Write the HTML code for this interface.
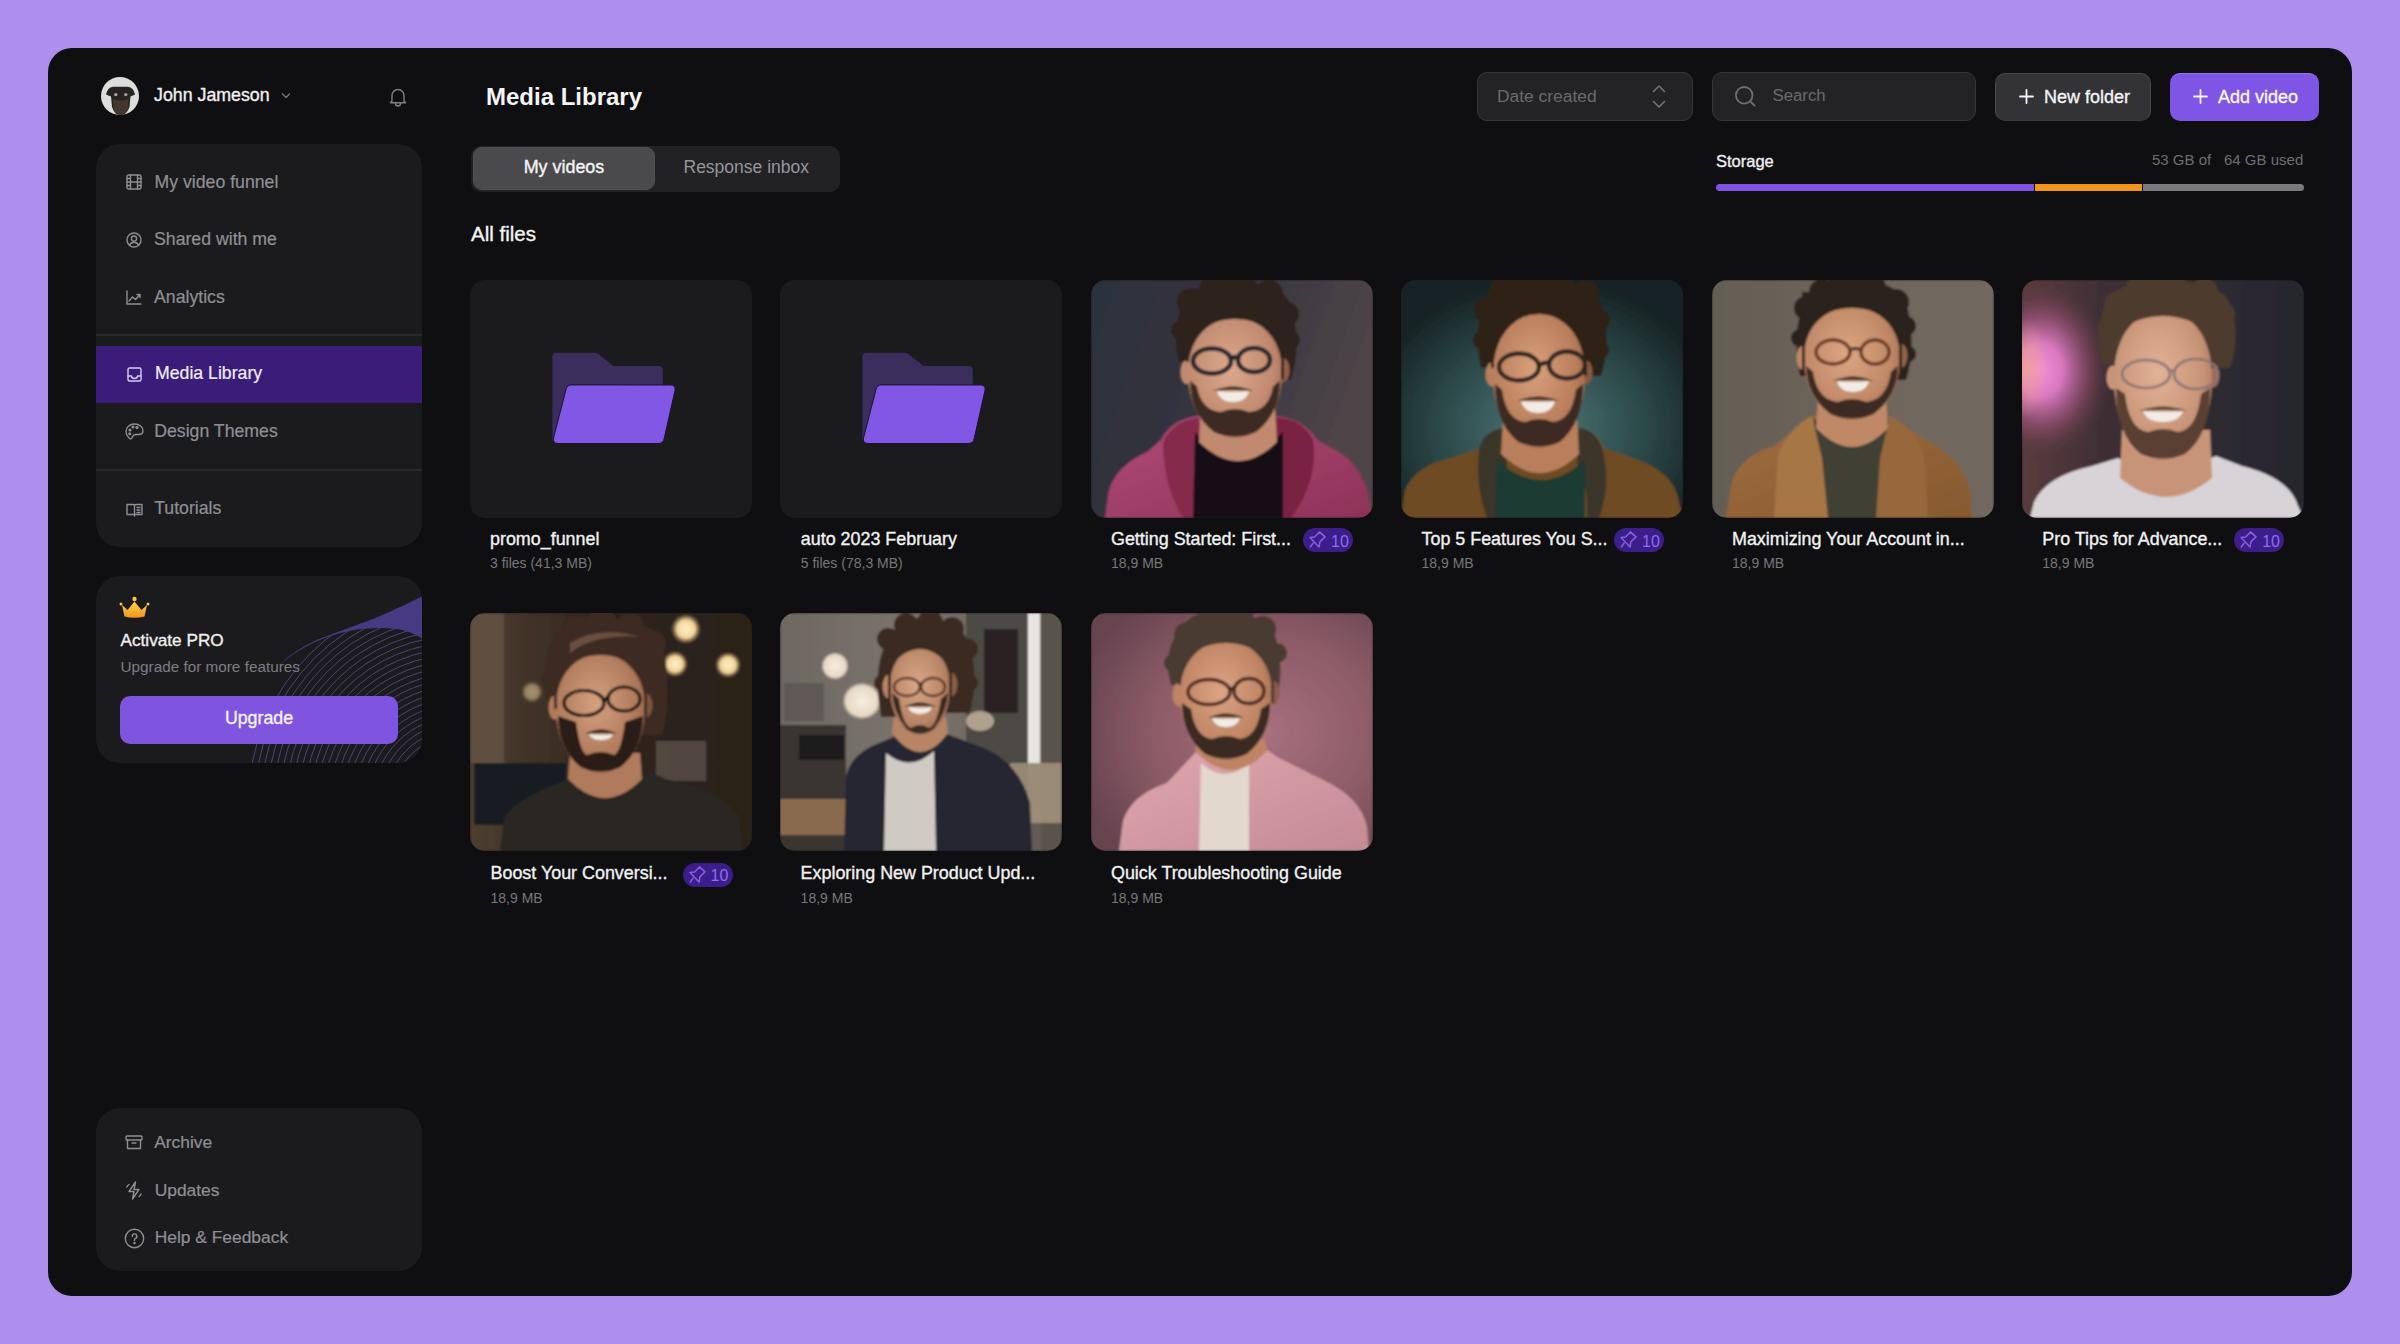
<!DOCTYPE html>
<html><head><meta charset="utf-8">
<style>
*{box-sizing:border-box;margin:0;padding:0}
html,body{width:2400px;height:1344px;overflow:hidden}
body{background:#AD8FEE;font-family:"Liberation Sans",sans-serif;position:relative;color:#fff}
.abs{position:absolute}
.panel{left:48px;top:48px;width:2304px;height:1248px;border-radius:24px;background:#0F0F11}
.card{background:#1B1B1E;border-radius:24px}
.t{position:absolute;white-space:nowrap;line-height:1}
.nav{color:#8F8F93;font-size:17.7px;-webkit-text-stroke:0.2px currentColor}
.ico{position:absolute;fill:none;stroke:#8F8F93;stroke-width:1.4;stroke-linecap:round;stroke-linejoin:round;overflow:visible}
.btn{position:absolute;border-radius:10px}
.thumb{position:absolute;width:282px;height:238px;border-radius:15px;overflow:hidden;background:#1B1B1E}
.title{position:absolute;font-size:17.9px;color:#F2F2F2;white-space:nowrap;line-height:1;-webkit-text-stroke:0.35px #F2F2F2}
.med{-webkit-text-stroke:0.35px currentColor}
.sub{position:absolute;font-size:14px;color:#77777B;white-space:nowrap;line-height:1}
.badge{position:absolute;width:50px;height:24px;border-radius:12px;background:#3C1E8A}
.badge svg{position:absolute;left:6px;top:5px}
.badge span{position:absolute;left:28px;top:5.5px;font-size:16px;line-height:1;color:#8F6CF2}
</style></head>
<body>
<div class="abs panel"></div>

<!-- header user -->
<svg class="abs" style="left:101px;top:77px" width="38" height="38" viewBox="0 0 38 38">
  <defs><clipPath id="av"><circle cx="19" cy="19" r="19"/></clipPath></defs>
  <g clip-path="url(#av)">
    <rect width="38" height="38" fill="#DCDDDD"/>
    <path d="M5,17.5 Q6.5,10.5 12,9.8 L27,9.8 Q32.5,10.5 34,17.5 L29.5,19.5 L28.5,30 Q25,38.5 19.5,38.5 Q14,38.5 11,30 L10,19.5 Z" fill="#272321"/>
    <path d="M12,22 Q19.5,25 27.5,22 L27,32 Q24,38 19.5,38 Q15,38 12.5,32Z" fill="#45372F"/>
    <circle cx="14.8" cy="17.6" r="1.7" fill="#A8A8A8"/><circle cx="24.8" cy="17.6" r="1.7" fill="#A0A0A0"/>
  </g>
</svg>
<div class="t med" style="left:154px;top:86.9px;font-size:17.8px;color:#F0F0F0">John Jameson</div>
<svg class="ico" style="left:281px;top:93px" width="10" height="6" viewBox="0 0 10 6"><path d="M1.5 1l3.5 3.5L8.5 1" stroke="#7A7A7E" stroke-width="1.3"/></svg>
<svg class="ico" style="left:388px;top:86px" width="20" height="22" viewBox="0 0 20 22"><path d="M4 15V9.5a6 6 0 0 1 12 0V15l1.6 1.8H2.4L4 15z M7.5 17.5a2.5 2.5 0 0 0 5 0" stroke="#7E7E82" stroke-width="1.4"/></svg>

<!-- title -->
<div class="t" style="left:486px;top:85.3px;font-size:24px;font-weight:bold;color:#F4F4F4">Media Library</div>

<!-- sidebar card 1 -->
<div class="abs card" style="left:96px;top:144px;width:326px;height:403px"></div>
<div class="abs" style="left:96px;top:334px;width:326px;height:1.5px;background:#29292C"></div>
<div class="abs" style="left:96px;top:469px;width:326px;height:1.5px;background:#29292C"></div>
<div class="abs" style="left:96px;top:346px;width:326px;height:57px;background:#3A1D78"></div>

<svg class="ico" style="left:126px;top:174px" width="16" height="16" viewBox="0 0 16 16"><rect x="1" y="1" width="14" height="14" rx="1.5"/><path d="M4.5 1v14M11.5 1v14M1 8h14M1 4.5h3.5M1 11.5h3.5M11.5 4.5H15M11.5 11.5H15"/></svg>
<div class="t nav" style="left:154.5px;top:174px">My video funnel</div>
<svg class="ico" style="left:126px;top:232px" width="16" height="16" viewBox="0 0 16 16"><circle cx="8" cy="8" r="7"/><circle cx="8" cy="6.6" r="2.6"/><path d="M3.4 13.2Q5 10.2 8 10.2T12.6 13.2"/></svg>
<div class="t nav" style="left:154px;top:231px">Shared with me</div>
<svg class="ico" style="left:126px;top:290px" width="16" height="15" viewBox="0 0 16 15"><path d="M1 1v13h14M3 11l3.5-4 3 2.5L14 4.5M11 4.5h3v3"/></svg>
<div class="t nav" style="left:154px;top:289px">Analytics</div>
<svg class="ico" style="left:127px;top:367px;stroke:#D8CCF8" width="15" height="15" viewBox="0 0 15 15"><rect x="1" y="1" width="13" height="13" rx="1.5"/><path d="M1 9h3.5q0 2.5 3 2.5t3-2.5H14"/></svg>
<div class="t nav" style="left:155px;top:365.3px;color:#F2ECFF">Media Library</div>
<svg class="ico" style="left:125px;top:423px" width="19" height="17" viewBox="0 0 19 17"><path d="M9.5 1C4.5 1 1 4.5 1 8.5c0 3 1.5 5 3 6.5s3 .5 3.5-1 1.5-2.5 3.5-2.5h2.5c3 0 4.5-1.5 4.5-3.5C18 4 14.5 1 9.5 1z"/><circle cx="5" cy="7" r=".9" fill="#8F8F93"/><circle cx="8" cy="4" r=".9" fill="#8F8F93"/><circle cx="12" cy="4.5" r=".9" fill="#8F8F93"/><circle cx="4.8" cy="10.8" r=".9" fill="#8F8F93"/></svg>
<div class="t nav" style="left:154.2px;top:423px">Design Themes</div>
<svg class="ico" style="left:126px;top:503px" width="17" height="14" viewBox="0 0 17 14"><path d="M1 1.5h6a1.5 1.5 0 0 1 1.5 1.5v10M16 1.5h-6A1.5 1.5 0 0 0 8.5 3v10M1 1.5v10h7.5M16 1.5v10H8.5M11 4.5h3M11 7h3M11 9.5h3"/></svg>
<div class="t nav" style="left:154.2px;top:499.5px">Tutorials</div>

<!-- activate pro -->
<div class="abs card" style="left:96px;top:576px;width:326px;height:187px;overflow:hidden">
  <svg class="abs" style="left:0;top:0" width="326" height="187" viewBox="0 0 326 187"><!--wave--><defs><clipPath id="wc"><path d="M327,19.6 C315,26 300,33 285.4,39.4 C265,48 243,55 221.8,63.4 C205,71 190,82 179.4,94.5 C170,106 164,120 160,140 L152,187 L327,187Z"/></clipPath></defs><g clip-path="url(#wc)" fill="none" stroke="#5A4E92" stroke-width="1" opacity="0.8"><circle cx="362" cy="226" r="42"/><circle cx="362" cy="226" r="48.2"/><circle cx="362" cy="226" r="54.400000000000006"/><circle cx="362" cy="226" r="60.60000000000001"/><circle cx="362" cy="226" r="66.80000000000001"/><circle cx="362" cy="226" r="73.00000000000001"/><circle cx="362" cy="226" r="79.20000000000002"/><circle cx="362" cy="226" r="85.40000000000002"/><circle cx="362" cy="226" r="91.60000000000002"/><circle cx="362" cy="226" r="97.80000000000003"/><circle cx="362" cy="226" r="104.00000000000003"/><circle cx="362" cy="226" r="110.20000000000003"/><circle cx="362" cy="226" r="116.40000000000003"/><circle cx="362" cy="226" r="122.60000000000004"/><circle cx="362" cy="226" r="128.80000000000004"/><circle cx="362" cy="226" r="135.00000000000003"/><circle cx="362" cy="226" r="141.20000000000002"/><circle cx="362" cy="226" r="147.4"/><circle cx="362" cy="226" r="153.6"/><circle cx="362" cy="226" r="159.79999999999998"/><circle cx="362" cy="226" r="165.99999999999997"/><circle cx="362" cy="226" r="172.19999999999996"/><circle cx="362" cy="226" r="178.39999999999995"/><circle cx="362" cy="226" r="184.59999999999994"/><circle cx="362" cy="226" r="190.79999999999993"/><circle cx="362" cy="226" r="196.99999999999991"/><circle cx="362" cy="226" r="203.1999999999999"/><circle cx="362" cy="226" r="209.3999999999999"/></g><path d="M327,19.6 C315,26 300,33 285.4,39.4 C265,48 243,55 221.8,63.4 C205,71 192,80 182,90 C200,74 225,60 257,54.2 C275,51 300,51 313.7,56.3 C320,59 324,61 327,63.4Z" fill="#4A3B88" opacity="0.95"/><!--/wave--></svg>
</div>
<svg class="abs" style="left:119px;top:596px" width="31" height="23" viewBox="0 0 31 23">
  <defs><linearGradient id="cr" x1="0" y1="0" x2="0" y2="1"><stop offset="0" stop-color="#FFD24A"/><stop offset="1" stop-color="#F0961E"/></linearGradient></defs>
  <path d="M3 9 L8.5 14 L15.5 5.5 L22.5 14 L28 9 L25.5 20.5 Q15.5 23 5.5 20.5Z" fill="url(#cr)"/>
  <circle cx="15.5" cy="3" r="2.2" fill="#FFC640"/><circle cx="2" cy="8" r="1.5" fill="#FFC640"/><circle cx="29" cy="8" r="1.5" fill="#FFC640"/>
</svg>
<div class="t med" style="left:120.5px;top:632.1px;font-size:17.2px;color:#F0F0F0">Activate PRO</div>
<div class="t" style="left:120.5px;top:658.5px;font-size:15.3px;color:#7E7E82">Upgrade for more features</div>
<div class="btn" style="left:120px;top:696px;width:278px;height:47.5px;background:#7F55E0;border-radius:10px"></div>
<div class="t med" style="left:120px;top:710px;width:278px;text-align:center;font-size:17.8px;color:#F6F0FF">Upgrade</div>

<!-- bottom card -->
<div class="abs card" style="left:96px;top:1108px;width:326px;height:163px"></div>
<svg class="ico" style="left:125px;top:1135px" width="18" height="15" viewBox="0 0 18 15"><rect x="1" y="1" width="16" height="4" rx="1"/><path d="M2.5 5v8.5h13V5M7 8h4"/></svg>
<div class="t nav" style="left:154.2px;top:1133.7px;font-size:17.4px">Archive</div>
<svg class="ico" style="left:125px;top:1181px" width="18" height="19" viewBox="0 0 18 19"><path d="M10.5 1L4 10.5h5L7.5 18l6.5-9.5H9z"/><path d="M4 3.5Q2.5 4.5 1.8 6M14 15.5q1.5-1 2.2-2.5" /></svg>
<div class="t nav" style="left:154.7px;top:1181.6px;font-size:17.4px">Updates</div>
<svg class="ico" style="left:124px;top:1228px" width="21" height="21" viewBox="0 0 21 21"><circle cx="10.5" cy="10.5" r="9.2"/><path d="M8.3 8.2a2.3 2.3 0 1 1 3.2 2.1c-.7.3-1 .8-1 1.5v.6"/><circle cx="10.5" cy="15" r=".6" fill="#8F8F93"/></svg>
<div class="t nav" style="left:154.7px;top:1229.4px;font-size:17.4px">Help &amp; Feedback</div>

<!-- top controls -->
<div class="btn" style="left:1477px;top:72px;width:216px;height:49px;background:#232326;border:1.5px solid #37373A"></div>
<div class="t" style="left:1497px;top:87.6px;font-size:17.4px;color:#6A6A6E">Date created</div>
<svg class="ico" style="left:1651px;top:83px" width="16" height="27" viewBox="0 0 16 27"><path d="M2.5 8.5L8 3l5.5 5.5M2.5 18.5L8 24l5.5-5.5" stroke="#76767A" stroke-width="1.5"/></svg>
<div class="btn" style="left:1712px;top:72px;width:264px;height:49px;background:#232326;border:1.5px solid #37373A"></div>
<svg class="ico" style="left:1733px;top:84px" width="24" height="24" viewBox="0 0 24 24"><circle cx="11.2" cy="11.3" r="8.3" stroke="#6E6E72" stroke-width="1.8"/><path d="M18 18l3.5 3.5" stroke="#6E6E72" stroke-width="1.8"/></svg>
<div class="t" style="left:1772.5px;top:87.6px;font-size:16.8px;color:#6A6A6E">Search</div>
<div class="btn" style="left:1995px;top:72.5px;width:156px;height:48.5px;background:#333336;border:1.5px solid #48484B;border-bottom-color:#3A3A3D"></div>
<svg class="ico" style="left:2019px;top:89px" width="15" height="15" viewBox="0 0 15 15"><path d="M7.5 1v13M1 7.5h13" stroke="#F4F4F4" stroke-width="1.8"/></svg>
<div class="t med" style="left:2044px;top:87.8px;font-size:18px;color:#F4F4F4">New folder</div>
<div class="btn" style="left:2169.5px;top:72.5px;width:149.5px;height:48.5px;background:#7F55E6;border-top:1.5px solid #9574EE"></div>
<svg class="ico" style="left:2193px;top:89px" width="15" height="15" viewBox="0 0 15 15"><path d="M7.5 1v13M1 7.5h13" stroke="#F8F4FF" stroke-width="1.8"/></svg>
<div class="t med" style="left:2218px;top:87.8px;font-size:18px;color:#F8F4FF">Add video</div>

<!-- tabs -->
<div class="btn" style="left:471px;top:145.5px;width:368.5px;height:46px;background:#222225;border-radius:10px"></div>
<div class="btn" style="left:473px;top:146.5px;width:182px;height:43px;background:#4A4A4D;border-radius:9px;border:1px solid #505053"></div>
<div class="t med" style="left:473px;top:158.5px;width:182px;text-align:center;font-size:17.9px;color:#F4F4F4">My videos</div>
<div class="t" style="left:683.5px;top:158.5px;font-size:17.5px;color:#96969A">Response inbox</div>

<div class="t med" style="left:471px;top:223.9px;font-size:20.5px;color:#F4F4F4">All files</div>

<!-- storage -->
<div class="t med" style="left:1716px;top:152.5px;font-size:16.5px;color:#F0F0F0">Storage</div>
<div class="t" style="left:2152px;top:151.5px;font-size:15px;color:#6E6E72">53 GB of</div>
<div class="t" style="left:2224px;top:151.5px;font-size:15px;color:#6E6E72">64 GB used</div>
<div class="abs" style="left:1716px;top:184px;width:588px;height:7px;border-radius:4px;background:#0F0F11;overflow:hidden">
  <div class="abs" style="left:0;top:0;width:318px;height:7px;background:#7F55E0"></div>
  <div class="abs" style="left:319px;top:0;width:107px;height:7px;background:#F0961E"></div>
  <div class="abs" style="left:427px;top:0;width:161px;height:7px;background:#7A7A7C"></div>
</div>

<!-- GRID -->
<div class="thumb" style="left:470px;top:280px"><!--f1--><svg width="282" height="238" viewBox="0 0 282 238" style="display:block"><path d="M86.4,72.8 L124.5,72.8 Q127,72.8 129,74.5 L143.5,86.1 L188.8,86.1 Q192.8,86.1 192.8,90.1 L192.8,160 L82.4,160 L82.4,76.8 Q82.4,72.8 86.4,72.8Z" fill="#3B2D5C"/><path d="M101.5,104.9 L200.5,105 Q206,105 205,110.5 L194.2,158.5 Q193.2,163.5 188.2,163.5 L88.3,163.5 Q82.5,163.5 83.5,158 L96,109.5 Q97,104.9 101.5,104.9Z" fill="#8257E5" stroke="#1A1230" stroke-width="1"/></svg><!--/f1--></div>
<div class="thumb" style="left:780.4px;top:280px"><!--f2--><svg width="282" height="238" viewBox="0 0 282 238" style="display:block"><path d="M86.4,72.8 L124.5,72.8 Q127,72.8 129,74.5 L143.5,86.1 L188.8,86.1 Q192.8,86.1 192.8,90.1 L192.8,160 L82.4,160 L82.4,76.8 Q82.4,72.8 86.4,72.8Z" fill="#3B2D5C"/><path d="M101.5,104.9 L200.5,105 Q206,105 205,110.5 L194.2,158.5 Q193.2,163.5 188.2,163.5 L88.3,163.5 Q82.5,163.5 83.5,158 L96,109.5 Q97,104.9 101.5,104.9Z" fill="#8257E5" stroke="#1A1230" stroke-width="1"/></svg><!--/f2--></div>
<div class="thumb" style="left:1090.8px;top:280px"><!--p3--><svg width="282" height="238" viewBox="0 0 282 238" style="display:block"><defs><linearGradient id="g3" x1="0" y1="0" x2="1" y2="0.3"><stop offset="0" stop-color="#2B303D"/><stop offset="0.45" stop-color="#34343F"/><stop offset="1" stop-color="#4F4548"/></linearGradient><linearGradient id="hd3" x1="0" y1="0" x2="1" y2="1"><stop offset="0" stop-color="#B04C78"/><stop offset="1" stop-color="#8E3258"/></linearGradient><radialGradient id="skp3" cx="0.45" cy="0.42" r="0.7"><stop offset="0" stop-color="#DCA88C"/><stop offset="0.65" stop-color="#C18A70"/><stop offset="1" stop-color="#96604C"/></radialGradient><filter id="bp3" x="-5%" y="-5%" width="110%" height="110%"><feGaussianBlur stdDeviation="0.9"/></filter><filter id="bbp3" x="-50%" y="-50%" width="200%" height="200%"><feGaussianBlur stdDeviation="6"/></filter></defs><g filter="url(#bp3)"><rect width="282" height="238" fill="url(#g3)"/><path d="M14,238 L18,210 Q26,185 56,172 L70,160 Q80,140 106,136 L184,136 Q212,138 226,160 L240,168 Q266,180 276,210 L282,238Z" fill="url(#hd3)" /><path d="M72,162 Q82,140 108,138 L114,200 L104,238 L92,238 Q72,205 72,162Z" fill="#86294C" /><path d="M222,160 Q210,136 180,138 L176,200 L188,238 L200,238 Q228,200 222,160Z" fill="#7A2242" /><path d="M102,238 L104,152 Q145,200 192,152 L192,238Z" fill="#121113" /><path d="M110,128 L184,128 L186,162 Q147.0,200 108,162Z" fill="#C18A70" /><path d="M88,82 Q78,42 98,16 Q124.0,-8 154.0,2 Q198,6 202,32 Q210,70 200,100 L187,100 L101,82 Z" fill="#2F241E" /><ellipse cx="100" cy="22" rx="14" ry="14" fill="#2F241E" /><ellipse cx="122" cy="10" rx="14" ry="14" fill="#2F241E" /><ellipse cx="150" cy="8" rx="16" ry="16" fill="#2F241E" /><ellipse cx="178" cy="14" rx="14" ry="14" fill="#2F241E" /><ellipse cx="196" cy="34" rx="12" ry="12" fill="#2F241E" /><ellipse cx="90" cy="50" rx="10" ry="10" fill="#2F241E" /><ellipse cx="200" cy="60" rx="9" ry="9" fill="#2F241E" /><ellipse cx="96" cy="92.0" rx="6.5" ry="12" fill="#C18A70" /><ellipse cx="192" cy="90.0" rx="6.5" ry="12" fill="#96604C" /><path d="M97,92.0 C97,20.0 191,20.0 191,92.0 C191,131.60000000000002 169.85,158 144.0,158 C118.15,158 97,131.60000000000002 97,92.0Z" fill="url(#skp3)" /><path d="M95,82 L95,14 L193,14 L193,100 L190,100 L190,55 Q144.0,23 98,55 L98,82 Z" fill="#2F241E" /><path d="M99,100.4 Q99,133 122.85,152 Q144.0,161 165.15,152 Q189,133 189,100.4 L182,106.4 Q178,130 158.1,132 Q144.0,126 129.9,132 Q110,130 106,106.4Z" fill="#3C2C24" /><path d="M122,111 Q142,102 162,111 Q142,109 122,111Z" fill="#3C2C24" /><path d="M126,111 Q142,113 158,111 Q154.8,122 142,122 Q129.2,122 126,111Z" fill="#F1ECE6" /><g fill="none" stroke="#25262E" stroke-width="4.6"><ellipse cx="121" cy="81" rx="19" ry="12.5"/><ellipse cx="163" cy="80" rx="16" ry="12"/><path d="M140,79 Q143.5,76 147,78"/></g></g></svg><!--/p3--></div>
<div class="thumb" style="left:1401.2px;top:280px"><!--p4--><svg width="282" height="238" viewBox="0 0 282 238" style="display:block"><defs><radialGradient id="g4" cx="0.5" cy="0.62" r="0.62"><stop offset="0" stop-color="#4E7775"/><stop offset="0.55" stop-color="#2E4C4C"/><stop offset="1" stop-color="#172426"/></radialGradient><radialGradient id="skp4" cx="0.45" cy="0.42" r="0.7"><stop offset="0" stop-color="#D9A07C"/><stop offset="0.65" stop-color="#B97E5C"/><stop offset="1" stop-color="#8A5840"/></radialGradient><filter id="bp4" x="-5%" y="-5%" width="110%" height="110%"><feGaussianBlur stdDeviation="0.9"/></filter><filter id="bbp4" x="-50%" y="-50%" width="200%" height="200%"><feGaussianBlur stdDeviation="6"/></filter></defs><g filter="url(#bp4)"><rect width="282" height="238" fill="url(#g4)"/><path d="M0,238 L4,210 Q14,186 50,178 L80,168 Q90,150 110,150 L180,150 Q198,152 202,168 L232,178 Q268,190 276,214 L282,238Z" fill="#6E4C24" /><path d="M78,170 Q82,150 104,148 L106,188 Q96,205 98,238 L86,238 Q74,205 78,170Z" fill="#3A342C" /><path d="M202,172 Q196,150 178,148 L176,188 Q188,205 186,238 L198,238 Q210,205 202,172Z" fill="#3A342C" /><path d="M94,238 L96,180 Q140,220 184,180 L184,238Z" fill="#1E3A30" /><path d="M102,140 L176,140 L178,174 Q139.0,212 100,174Z" fill="#B97E5C" /><path d="M80,88 Q70,40 90,14 Q120.0,-10 150.0,0 Q198,4 202,30 Q210,66 200,96 L180,96 L96,88 Z" fill="#2E2119" /><ellipse cx="86" cy="30" rx="13" ry="13" fill="#2E2119" /><ellipse cx="102" cy="12" rx="14" ry="14" fill="#2E2119" /><ellipse cx="128" cy="4" rx="15" ry="15" fill="#2E2119" /><ellipse cx="158" cy="4" rx="15" ry="15" fill="#2E2119" /><ellipse cx="184" cy="14" rx="14" ry="14" fill="#2E2119" /><ellipse cx="198" cy="40" rx="11" ry="11" fill="#2E2119" /><ellipse cx="82" cy="60" rx="10" ry="10" fill="#2E2119" /><ellipse cx="200" cy="70" rx="8" ry="8" fill="#2E2119" /><ellipse cx="91" cy="94.30000000000001" rx="6.5" ry="12" fill="#B97E5C" /><ellipse cx="185" cy="92.30000000000001" rx="6.5" ry="12" fill="#8A5840" /><path d="M92,94.30000000000001 C92,13.899999999999997 184,13.899999999999997 184,94.30000000000001 C184,138.52 163.3,168 138.0,168 C112.7,168 92,138.52 92,94.30000000000001Z" fill="url(#skp4)" /><path d="M90,88 L90,12 L186,12 L186,96 L183,96 L183,50 Q138.0,18 93,50 L93,88 Z" fill="#2E2119" /><path d="M94,103.68 Q94,143 117.3,162 Q138.0,171 158.7,162 Q182,143 182,103.68 L175,109.68 Q171,140 151.8,142 Q138.0,136 124.2,142 Q105,140 101,109.68Z" fill="#3C2C24" /><path d="M116,121 Q137,112 158,121 Q137,119 116,121Z" fill="#3C2C24" /><path d="M120,121 Q137,123 154,121 Q150.6,133 137,133 Q123.4,133 120,121Z" fill="#F1ECE6" /><g fill="none" stroke="#2E2620" stroke-width="4.4"><ellipse cx="118" cy="87" rx="20" ry="13.5"/><ellipse cx="166" cy="85" rx="18" ry="13.5"/><path d="M138,85 Q143.0,82 148,83"/></g></g></svg><!--/p4--></div>
<div class="thumb" style="left:1711.6px;top:280px"><!--p5--><svg width="282" height="238" viewBox="0 0 282 238" style="display:block"><defs><linearGradient id="g5" x1="0" y1="0" x2="1" y2="0"><stop offset="0" stop-color="#645D55"/><stop offset="0.5" stop-color="#6E665C"/><stop offset="1" stop-color="#716860"/></linearGradient><linearGradient id="jk5" x1="0" y1="0" x2="1" y2="1"><stop offset="0" stop-color="#9E6E40"/><stop offset="1" stop-color="#87592E"/></linearGradient><radialGradient id="skp5" cx="0.45" cy="0.42" r="0.7"><stop offset="0" stop-color="#DCA684"/><stop offset="0.65" stop-color="#C08866"/><stop offset="1" stop-color="#94644A"/></radialGradient><filter id="bp5" x="-5%" y="-5%" width="110%" height="110%"><feGaussianBlur stdDeviation="0.9"/></filter><filter id="bbp5" x="-50%" y="-50%" width="200%" height="200%"><feGaussianBlur stdDeviation="6"/></filter></defs><g filter="url(#bp5)"><rect width="282" height="238" fill="url(#g5)"/><path d="M14,238 L20,200 Q30,176 62,166 L96,140 L106,134 L172,134 L186,142 L214,160 Q250,178 258,210 L260,238Z" fill="url(#jk5)" /><path d="M100,238 L102,138 Q140,172 176,138 L178,238Z" fill="#3F4036" /><path d="M62,238 L66,176 Q74,150 100,136 L110,178 L116,238Z" fill="#A77645" /><path d="M216,238 L212,176 Q204,150 178,136 L168,178 L164,238Z" fill="#97683A" /><path d="M106,120 L174,120 L176,148 Q140.0,186 104,148Z" fill="#C08866" /><path d="M88,96 Q78,40 98,14 Q121.0,-10 151.0,0 Q192,4 196,30 Q204,70 194,100 L184,100 L96,96 Z" fill="#2C221C" /><ellipse cx="94" cy="28" rx="12" ry="12" fill="#2C221C" /><ellipse cx="110" cy="12" rx="13" ry="13" fill="#2C221C" /><ellipse cx="134" cy="6" rx="14" ry="14" fill="#2C221C" /><ellipse cx="160" cy="8" rx="14" ry="14" fill="#2C221C" /><ellipse cx="184" cy="22" rx="13" ry="13" fill="#2C221C" /><ellipse cx="194" cy="46" rx="10" ry="10" fill="#2C221C" /><ellipse cx="88" cy="58" rx="9" ry="9" fill="#2C221C" /><ellipse cx="196" cy="74" rx="8" ry="8" fill="#2C221C" /><ellipse cx="91" cy="77.85" rx="6.5" ry="12" fill="#C08866" /><ellipse cx="189" cy="75.85" rx="6.5" ry="12" fill="#94644A" /><path d="M92,77.85 C92,10.050000000000002 188,10.050000000000002 188,77.85 C188,115.14 166.4,140 140.0,140 C113.6,140 92,115.14 92,77.85Z" fill="url(#skp5)" /><path d="M90,96 L90,12 L190,12 L190,100 L187,100 L187,44 Q140.0,12 93,44 L93,96 Z" fill="#2C221C" /><path d="M94,85.76 Q94,115 118.4,134 Q140.0,143 161.6,134 Q186,115 186,85.76 L179,91.76 Q175,120 154.4,122 Q140.0,116 125.6,122 Q105,120 101,91.76Z" fill="#3C2C24" /><path d="M121,101 Q141,92 161,101 Q141,99 121,101Z" fill="#3C2C24" /><path d="M125,101 Q141,103 157,101 Q153.8,112 141,112 Q128.2,112 125,101Z" fill="#F1ECE6" /><g fill="none" stroke="#6A3A22" stroke-width="3.4"><ellipse cx="121" cy="72" rx="17" ry="12"/><ellipse cx="163" cy="72" rx="14" ry="12"/><path d="M138,70 Q143.5,67 149,70"/></g></g></svg><!--/p5--></div>
<div class="thumb" style="left:2022px;top:280px"><!--p6--><svg width="282" height="238" viewBox="0 0 282 238" style="display:block"><defs><linearGradient id="g6" x1="0" y1="0" x2="1" y2="0"><stop offset="0" stop-color="#5A3C3C"/><stop offset="0.3" stop-color="#3E2E36"/><stop offset="0.7" stop-color="#2E2A33"/><stop offset="1" stop-color="#26252E"/></linearGradient><radialGradient id="gl6" cx="0.45" cy="0.5" r="0.5"><stop offset="0" stop-color="#EE90DA"/><stop offset="0.3" stop-color="#D878C0"/><stop offset="0.65" stop-color="#8A4A6A" stop-opacity="0.7"/><stop offset="1" stop-color="#4A3436" stop-opacity="0"/></radialGradient><radialGradient id="gl6b" cx="0.5" cy="0.5" r="0.5"><stop offset="0" stop-color="#F6A890"/><stop offset="1" stop-color="#F6A890" stop-opacity="0"/></radialGradient><radialGradient id="skp6" cx="0.45" cy="0.42" r="0.7"><stop offset="0" stop-color="#E2B296"/><stop offset="0.65" stop-color="#C89478"/><stop offset="1" stop-color="#9E6A54"/></radialGradient><filter id="bp6" x="-5%" y="-5%" width="110%" height="110%"><feGaussianBlur stdDeviation="0.9"/></filter><filter id="bbp6" x="-50%" y="-50%" width="200%" height="200%"><feGaussianBlur stdDeviation="6"/></filter></defs><g filter="url(#bp6)"><rect width="282" height="238" fill="url(#g6)"/><ellipse cx="26" cy="90" rx="72" ry="92" fill="url(#gl6)"/><ellipse cx="4" cy="88" rx="22" ry="50" fill="url(#gl6b)" opacity="0.8"/><path d="M8,238 L12,222 Q24,196 70,186 L96,178 Q140,200 194,176 L220,186 Q268,198 276,226 L282,238Z" fill="#D8D3D6" /><path d="M100,150 L188,150 L190,198 Q144.0,236 98,198Z" fill="#C89478" /><path d="M80,84 Q70,40 90,14 Q124.0,-10 154.0,0 Q206,4 210,30 Q218,58 208,88 L186,88 L96,84 Z" fill="#4E3A2E" /><ellipse cx="94" cy="24" rx="12" ry="12" fill="#4E3A2E" /><ellipse cx="118" cy="8" rx="14" ry="14" fill="#4E3A2E" /><ellipse cx="150" cy="6" rx="15" ry="15" fill="#4E3A2E" /><ellipse cx="182" cy="12" rx="14" ry="14" fill="#4E3A2E" /><ellipse cx="202" cy="34" rx="11" ry="11" fill="#4E3A2E" /><ellipse cx="84" cy="48" rx="9" ry="9" fill="#4E3A2E" /><ellipse cx="91" cy="97.5" rx="6.5" ry="12" fill="#C89478" /><ellipse cx="191" cy="95.5" rx="6.5" ry="12" fill="#9E6A54" /><path d="M92,97.5 C92,7.5 190,7.5 190,97.5 C190,147.0 167.95,180 141.0,180 C114.05,180 92,147.0 92,97.5Z" fill="url(#skp6)" /><path d="M90,84 L90,12 L192,12 L192,88 L189,88 L189,52 Q141.0,20 93,52 L93,84 Z" fill="#4E3A2E" /><path d="M94,108.0 Q94,155 118.95,174 Q141.0,183 163.05,174 Q188,155 188,108.0 L179,114.0 Q175,150 155.7,152 Q141.0,146 126.3,152 Q107,150 103,114.0Z" fill="#5A4032" /><path d="M117,131 Q141,122 165,131 Q141,129 117,131Z" fill="#5A4032" /><path d="M121,131 Q141,133 161,131 Q157.0,142 141,142 Q125.0,142 121,131Z" fill="#F1ECE6" /><g fill="none" stroke="#8A7474" stroke-width="2.6"><ellipse cx="124" cy="94" rx="24" ry="14"/><ellipse cx="174" cy="94" rx="22" ry="15"/><path d="M148,92 Q150.0,89 152,92"/></g></g></svg><!--/p6--></div>
<div class="thumb" style="left:470px;top:613px"><!--p7--><svg width="282" height="238" viewBox="0 0 282 238" style="display:block"><defs><linearGradient id="g7" x1="0" y1="0" x2="1" y2="0"><stop offset="0" stop-color="#4E3E30"/><stop offset="0.5" stop-color="#2E241C"/><stop offset="1" stop-color="#2A2119"/></linearGradient><radialGradient id="bk7" cx="0.5" cy="0.5" r="0.5"><stop offset="0" stop-color="#FFF0C8"/><stop offset="0.6" stop-color="#F0D49A"/><stop offset="1" stop-color="#C09060" stop-opacity="0"/></radialGradient><radialGradient id="skp7" cx="0.45" cy="0.42" r="0.7"><stop offset="0" stop-color="#D4A080"/><stop offset="0.65" stop-color="#B07A5C"/><stop offset="1" stop-color="#7E5440"/></radialGradient><filter id="bp7" x="-5%" y="-5%" width="110%" height="110%"><feGaussianBlur stdDeviation="0.9"/></filter><filter id="bbp7" x="-50%" y="-50%" width="200%" height="200%"><feGaussianBlur stdDeviation="6"/></filter></defs><g filter="url(#bp7)"><rect width="282" height="238" fill="url(#g7)"/><rect x="0" y="0" width="34" height="150" fill="#6A5848" opacity="0.7"/><rect x="4" y="150" width="92" height="62" fill="#151A22"/><rect x="186" y="128" width="50" height="40" fill="#6A6058" opacity="0.6"/><ellipse cx="216" cy="16" rx="15" ry="15" fill="url(#bk7)"/><ellipse cx="205" cy="51" rx="13" ry="13" fill="url(#bk7)"/><ellipse cx="258" cy="52" rx="13" ry="13" fill="url(#bk7)"/><ellipse cx="62" cy="79" rx="11" ry="11" fill="url(#bk7)" opacity="0.5"/><path d="M30,238 L34,206 Q44,186 90,170 L106,160 Q140,180 178,158 L196,166 Q258,180 270,206 L272,238Z" fill="#2B2622" /><path d="M100,140 L170,140 L172,166 Q135.0,204 98,166Z" fill="#B07A5C" /><path d="M78,96 Q68,46 88,20 Q115.0,-4 145.0,6 Q190,10 194,36 Q202,92 192,122 L171,122 L90,96 Z" fill="#3C2B21" /><ellipse cx="90" cy="40" rx="13" ry="13" fill="#3C2B21" /><ellipse cx="106" cy="18" rx="14" ry="14" fill="#3C2B21" /><ellipse cx="132" cy="10" rx="15" ry="15" fill="#3C2B21" /><ellipse cx="160" cy="14" rx="14" ry="14" fill="#3C2B21" /><ellipse cx="184" cy="30" rx="12" ry="12" fill="#3C2B21" /><ellipse cx="80" cy="66" rx="9" ry="9" fill="#3C2B21" /><ellipse cx="190" cy="80" rx="8" ry="8" fill="#3C2B21" /><ellipse cx="188" cy="108" rx="6" ry="6" fill="#3C2B21" /><ellipse cx="85" cy="94.55000000000001" rx="6.5" ry="12" fill="#B07A5C" /><ellipse cx="176" cy="92.55000000000001" rx="6.5" ry="12" fill="#7E5440" /><path d="M86,94.55000000000001 C86,23.149999999999995 175,23.149999999999995 175,94.55000000000001 C175,133.82 154.975,160 130.5,160 C106.025,160 86,133.82 86,94.55000000000001Z" fill="url(#skp7)" /><path d="M84,96 L84,18 L177,18 L177,122 L174,122 L174,58 Q130.5,26 87,58 L87,96 Z" fill="#3C2B21" /><path d="M100,30 Q130,12 170,24 Q150,22 130,26 Q112,30 100,40Z" fill="#6A5040" /><path d="M88,102.88 Q88,135 110.475,154 Q130.5,163 150.525,154 Q173,135 173,102.88 L155,108.88 Q151,140 143.85,142 Q130.5,136 117.15,142 Q110,140 106,108.88Z" fill="#2A1E18" /><path d="M115,121 Q131,112 147,121 Q131,119 115,121Z" fill="#2A1E18" /><path d="M119,121 Q131,123 143,121 Q140.6,127 131,127 Q121.4,127 119,121Z" fill="#F1ECE6" /><g fill="none" stroke="#18120F" stroke-width="3.2"><ellipse cx="114" cy="90" rx="20" ry="12.5"/><ellipse cx="154" cy="86" rx="16" ry="12"/><path d="M134,88 Q136.0,85 138,84"/></g></g></svg><!--/p7--></div>
<div class="thumb" style="left:780.4px;top:613px"><!--p8--><svg width="282" height="238" viewBox="0 0 282 238" style="display:block"><defs><linearGradient id="g8" x1="0" y1="0" x2="1" y2="0"><stop offset="0" stop-color="#6E6862"/><stop offset="0.5" stop-color="#7C756E"/><stop offset="1" stop-color="#5E5650"/></linearGradient><radialGradient id="lp8" cx="0.5" cy="0.5" r="0.5"><stop offset="0" stop-color="#F6EEE0"/><stop offset="0.8" stop-color="#E6D8C4"/><stop offset="1" stop-color="#C0B0A0" stop-opacity="0"/></radialGradient><radialGradient id="skp8" cx="0.45" cy="0.42" r="0.7"><stop offset="0" stop-color="#D8A888"/><stop offset="0.65" stop-color="#B88466"/><stop offset="1" stop-color="#8A5E48"/></radialGradient><filter id="bp8" x="-5%" y="-5%" width="110%" height="110%"><feGaussianBlur stdDeviation="0.9"/></filter><filter id="bbp8" x="-50%" y="-50%" width="200%" height="200%"><feGaussianBlur stdDeviation="6"/></filter></defs><g filter="url(#bp8)"><rect width="282" height="238" fill="url(#g8)"/><rect x="186" y="0" width="62" height="238" fill="#4E4844"/><rect x="204" y="16" width="34" height="84" fill="#2A2420"/><rect x="248" y="0" width="12" height="150" fill="#E8E6E2"/><rect x="262" y="0" width="20" height="238" fill="#5A524C"/><rect x="0" y="112" width="66" height="126" fill="#3A3430"/><rect x="19" y="122" width="45" height="25" fill="#1E1C1C"/><rect x="0" y="186" width="66" height="36" fill="#8A6A50"/><rect x="4" y="70" width="40" height="38" fill="#5A5450" opacity="0.8"/><rect x="230" y="150" width="52" height="60" fill="#A89880" opacity="0.8"/><ellipse cx="55" cy="53" rx="14" ry="14" fill="url(#lp8)"/><ellipse cx="82" cy="88" rx="20" ry="19" fill="url(#lp8)"/><ellipse cx="200" cy="108" rx="14" ry="10" fill="#C8B8A0" opacity="0.8"/><path d="M64,238 L66,164 Q70,140 104,128 L118,122 Q140,140 164,120 L196,132 Q238,146 250,190 L252,238Z" fill="#262830" /><path d="M104,238 L106,140 Q130,160 154,138 L156,238Z" fill="#CFCAC3" /><path d="M114,104 L166,104 L168,120 Q140.0,158 112,120Z" fill="#B88466" /><path d="M101,104 Q91,48 111,22 Q125.0,-2 155.0,8 Q187,12 191,38 Q199,70 189,100 L166,100 L114,104 Z" fill="#3A2A22" /><ellipse cx="108" cy="26" rx="11" ry="11" fill="#3A2A22" /><ellipse cx="126" cy="12" rx="12" ry="12" fill="#3A2A22" /><ellipse cx="150" cy="10" rx="13" ry="13" fill="#3A2A22" /><ellipse cx="172" cy="16" rx="12" ry="12" fill="#3A2A22" /><ellipse cx="188" cy="36" rx="10" ry="10" fill="#3A2A22" /><ellipse cx="102" cy="70" rx="8" ry="8" fill="#3A2A22" /><ellipse cx="190" cy="70" rx="8" ry="8" fill="#3A2A22" /><ellipse cx="186" cy="92" rx="6" ry="6" fill="#3A2A22" /><ellipse cx="109" cy="73.6" rx="6.5" ry="12" fill="#B88466" /><ellipse cx="171" cy="71.6" rx="6.5" ry="12" fill="#8A5E48" /><path d="M110,73.6 C110,20.8 170,20.8 170,73.6 C170,102.64 156.5,122 140.0,122 C123.5,122 110,102.64 110,73.6Z" fill="url(#skp8)" /><path d="M108,104 L108,20 L172,20 L172,100 L169,100 L169,52 Q140.0,20 111,52 L111,104 Z" fill="#3A2A22" /><path d="M112,79.76 Q112,97 126.5,116 Q140.0,125 153.5,116 Q168,97 168,79.76 L161,85.76 Q157,113 149.0,115 Q140.0,109 131.0,115 Q123,113 119,85.76Z" fill="#3A2C24" /><path d="M124,94 Q140,85 156,94 Q140,92 124,94Z" fill="#3A2C24" /><path d="M128,94 Q140,96 152,94 Q149.6,101 140,101 Q130.4,101 128,94Z" fill="#F1ECE6" /><g fill="none" stroke="#5A3028" stroke-width="2.4"><ellipse cx="127" cy="74" rx="13" ry="9"/><ellipse cx="153" cy="74" rx="12" ry="9"/><path d="M140,72 Q140.5,69 141,72"/></g></g></svg><!--/p8--></div>
<div class="thumb" style="left:1090.8px;top:613px"><!--p9--><svg width="282" height="238" viewBox="0 0 282 238" style="display:block"><defs><radialGradient id="g9" cx="0.62" cy="0.5" r="0.7"><stop offset="0" stop-color="#A8707E"/><stop offset="0.6" stop-color="#8A5A66"/><stop offset="1" stop-color="#664450"/></radialGradient><linearGradient id="sh9" x1="0" y1="0" x2="1" y2="1"><stop offset="0" stop-color="#E0A8B0"/><stop offset="1" stop-color="#C48A96"/></linearGradient><radialGradient id="skp9" cx="0.45" cy="0.42" r="0.7"><stop offset="0" stop-color="#DCA484"/><stop offset="0.65" stop-color="#BE8464"/><stop offset="1" stop-color="#8E5C46"/></radialGradient><filter id="bp9" x="-5%" y="-5%" width="110%" height="110%"><feGaussianBlur stdDeviation="0.9"/></filter><filter id="bbp9" x="-50%" y="-50%" width="200%" height="200%"><feGaussianBlur stdDeviation="6"/></filter></defs><g filter="url(#bp9)"><rect width="282" height="238" fill="url(#g9)"/><path d="M28,238 L32,208 Q40,182 76,170 L104,140 L110,134 L172,134 L186,144 L230,166 Q270,184 276,214 L278,238Z" fill="url(#sh9)" /><path d="M108,238 L110,150 Q134,172 158,150 L158,238Z" fill="#E2D8CE" /><path d="M106,126 L174,126 L176,138 Q140.0,176 104,138Z" fill="#BE8464" /><path d="M80,72 Q70,40 90,14 Q112.0,-10 142.0,0 Q182,4 186,30 Q194,60 184,90 L177,90 L93,72 Z" fill="#4A3A30" /><ellipse cx="96" cy="22" rx="13" ry="13" fill="#4A3A30" /><ellipse cx="120" cy="8" rx="14" ry="14" fill="#4A3A30" /><ellipse cx="148" cy="6" rx="15" ry="15" fill="#4A3A30" /><ellipse cx="172" cy="16" rx="13" ry="13" fill="#4A3A30" /><ellipse cx="186" cy="40" rx="10" ry="10" fill="#4A3A30" /><ellipse cx="82" cy="50" rx="9" ry="9" fill="#4A3A30" /><ellipse cx="88" cy="81.55000000000001" rx="6.5" ry="12" fill="#BE8464" /><ellipse cx="182" cy="79.55000000000001" rx="6.5" ry="12" fill="#8E5C46" /><path d="M89,81.55000000000001 C89,10.149999999999997 181,10.149999999999997 181,81.55000000000001 C181,120.82000000000001 160.3,147 135.0,147 C109.7,147 89,120.82000000000001 89,81.55000000000001Z" fill="url(#skp9)" /><path d="M87,72 L87,12 L183,12 L183,90 L180,90 L180,46 Q135.0,14 90,46 L90,72 Z" fill="#4A3A30" /><path d="M91,89.88 Q91,122 114.3,141 Q135.0,150 155.7,141 Q179,122 179,89.88 L170,95.88 Q166,124 148.8,126 Q135.0,120 121.2,126 Q104,124 100,95.88Z" fill="#3A2C24" /><path d="M117,105 Q135,96 153,105 Q135,103 117,105Z" fill="#3A2C24" /><path d="M121,105 Q135,107 149,105 Q146.2,114 135,114 Q123.8,114 121,105Z" fill="#F1ECE6" /><g fill="none" stroke="#4A2A20" stroke-width="3.4"><ellipse cx="118" cy="79" rx="21" ry="12.5"/><ellipse cx="158" cy="78" rx="15" ry="12.5"/><path d="M139,77 Q141.0,74 143,76"/></g></g></svg><!--/p9--></div>

<div class="title" style="left:490px;top:530.7px">promo_funnel</div>
<div class="sub" style="left:490px;top:555.7px">3 files (41,3 MB)</div>
<div class="title" style="left:800.8px;top:530.7px">auto 2023 February</div>
<div class="sub" style="left:800.8px;top:555.7px">5 files (78,3 MB)</div>
<div class="title" style="left:1111px;top:530.7px">Getting Started: First...</div>
<div class="sub" style="left:1111px;top:555.7px">18,9 MB</div>
<div class="title" style="left:1421.5px;top:530.7px">Top 5 Features You S...</div>
<div class="sub" style="left:1421.5px;top:555.7px">18,9 MB</div>
<div class="title" style="left:1732px;top:530.7px">Maximizing Your Account in...</div>
<div class="sub" style="left:1732px;top:555.7px">18,9 MB</div>
<div class="title" style="left:2042.3px;top:530.7px">Pro Tips for Advance...</div>
<div class="sub" style="left:2042.3px;top:555.7px">18,9 MB</div>
<div class="title" style="left:490.5px;top:865.4px">Boost Your Conversi...</div>
<div class="sub" style="left:490.5px;top:891px">18,9 MB</div>
<div class="title" style="left:800.6px;top:865.4px">Exploring New Product Upd...</div>
<div class="sub" style="left:800.6px;top:891px">18,9 MB</div>
<div class="title" style="left:1111px;top:865.4px">Quick Troubleshooting Guide</div>
<div class="sub" style="left:1111px;top:891px">18,9 MB</div>

<!-- badges -->
<div class="badge" style="left:1303px;top:528px"><!--pin--><svg width="18" height="18" viewBox="0 0 18 18" style="position:absolute;left:5px;top:3px;overflow:visible"><path d="M2,6.5 L6.6,6 L11.5,0.9 L17,5.9 L12,10.6 L11,16 Z M5,12.2 L2.3,16" fill="none" stroke="#8560E0" stroke-width="1.5" stroke-linejoin="round" stroke-linecap="round"/></svg><!--/pin--><span>10</span></div>
<div class="badge" style="left:1614px;top:528px"><!--pin--><svg width="18" height="18" viewBox="0 0 18 18" style="position:absolute;left:5px;top:3px;overflow:visible"><path d="M2,6.5 L6.6,6 L11.5,0.9 L17,5.9 L12,10.6 L11,16 Z M5,12.2 L2.3,16" fill="none" stroke="#8560E0" stroke-width="1.5" stroke-linejoin="round" stroke-linecap="round"/></svg><!--/pin--><span>10</span></div>
<div class="badge" style="left:2234.2px;top:528px"><!--pin--><svg width="18" height="18" viewBox="0 0 18 18" style="position:absolute;left:5px;top:3px;overflow:visible"><path d="M2,6.5 L6.6,6 L11.5,0.9 L17,5.9 L12,10.6 L11,16 Z M5,12.2 L2.3,16" fill="none" stroke="#8560E0" stroke-width="1.5" stroke-linejoin="round" stroke-linecap="round"/></svg><!--/pin--><span>10</span></div>
<div class="badge" style="left:682.5px;top:862.8px"><!--pin--><svg width="18" height="18" viewBox="0 0 18 18" style="position:absolute;left:5px;top:3px;overflow:visible"><path d="M2,6.5 L6.6,6 L11.5,0.9 L17,5.9 L12,10.6 L11,16 Z M5,12.2 L2.3,16" fill="none" stroke="#8560E0" stroke-width="1.5" stroke-linejoin="round" stroke-linecap="round"/></svg><!--/pin--><span>10</span></div>

</body></html>
